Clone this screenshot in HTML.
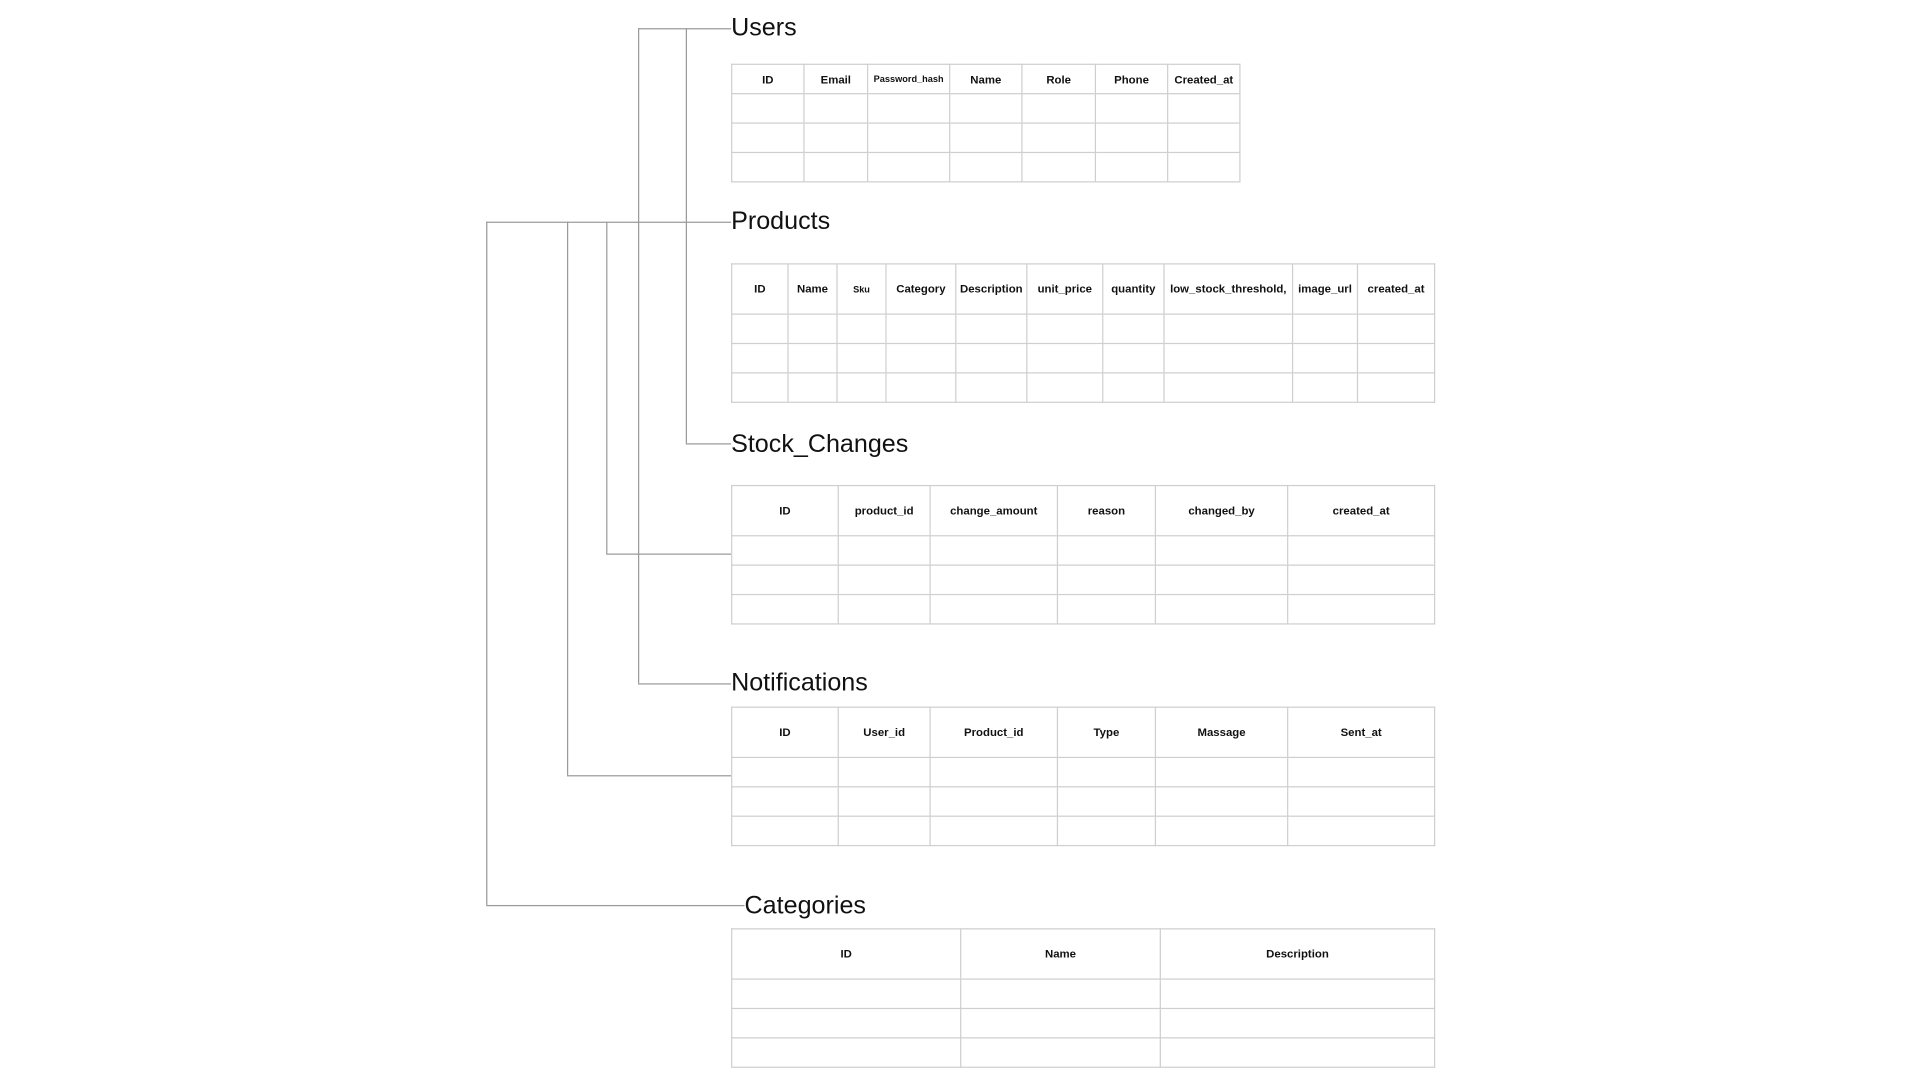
<!DOCTYPE html>
<html><head><meta charset="utf-8"><style>
html,body{margin:0;padding:0;background:#fff;width:1920px;height:1080px;overflow:hidden}
#w{position:absolute;left:0;top:0;width:1570px;height:882px;transform:scale(1.2246);transform-origin:0 0;font-family:"Liberation Sans",sans-serif}
.t{position:absolute;font-size:20.5px;color:#111;line-height:1;white-space:nowrap}
table{position:absolute;border-collapse:collapse;table-layout:fixed}
td{border:1px solid #cfcfcf;padding:0;text-align:center;font-weight:bold;font-size:9.3px;color:#111;height:23px}
tr.h td{height:40px}
.s{font-size:7.5px}
.l{position:absolute;background:#9a9a9a}
</style></head><body><div id="w">
<div class="l" style="left:560px;top:23px;width:1.3px;height:339px"></div>
<div class="l" style="left:560px;top:23px;width:37px;height:1.3px"></div>
<div class="l" style="left:560px;top:362px;width:37px;height:1.3px"></div>
<div class="l" style="left:521px;top:23px;width:1.3px;height:535px"></div>
<div class="l" style="left:521px;top:23px;width:40px;height:1.3px"></div>
<div class="l" style="left:521px;top:558px;width:76px;height:1.3px"></div>
<div class="l" style="left:397px;top:181px;width:200px;height:1.3px"></div>
<div class="l" style="left:397px;top:181px;width:1.3px;height:558px"></div>
<div class="l" style="left:397px;top:739px;width:211px;height:1.3px"></div>
<div class="l" style="left:463px;top:181px;width:1.3px;height:452px"></div>
<div class="l" style="left:463px;top:633px;width:134px;height:1.3px"></div>
<div class="l" style="left:495px;top:181px;width:1.3px;height:271px"></div>
<div class="l" style="left:495px;top:452px;width:102px;height:1.3px"></div>

<div class="t" style="left:597px;top:13px">Users</div>
<table style="left:597px;top:52px;width:415px">
<colgroup><col style="width:59px"><col style="width:52px"><col style="width:67px"><col style="width:59px"><col style="width:60px"><col style="width:59px"><col style="width:59px"></colgroup>
<tr style="height:23px"><td>ID</td><td>Email</td><td class="s">Password_hash</td><td>Name</td><td>Role</td><td>Phone</td><td>Created_at</td></tr>
<tr><td></td><td></td><td></td><td></td><td></td><td></td><td></td></tr>
<tr><td></td><td></td><td></td><td></td><td></td><td></td><td></td></tr>
<tr><td></td><td></td><td></td><td></td><td></td><td></td><td></td></tr>
</table>

<div class="t" style="left:597px;top:171px">Products</div>
<table style="left:597px;top:215px;width:574px">
<colgroup><col style="width:46px"><col style="width:40px"><col style="width:40px"><col style="width:57px"><col style="width:58px"><col style="width:62px"><col style="width:50px"><col style="width:105px"><col style="width:53px"><col style="width:63px"></colgroup>
<tr class="h"><td>ID</td><td>Name</td><td class="s">Sku</td><td>Category</td><td>Description</td><td>unit_price</td><td>quantity</td><td>low_stock_threshold,</td><td>image_url</td><td>created_at</td></tr>
<tr><td></td><td></td><td></td><td></td><td></td><td></td><td></td><td></td><td></td><td></td></tr>
<tr><td></td><td></td><td></td><td></td><td></td><td></td><td></td><td></td><td></td><td></td></tr>
<tr><td></td><td></td><td></td><td></td><td></td><td></td><td></td><td></td><td></td><td></td></tr>
</table>

<div class="t" style="left:597px;top:353px">Stock_Changes</div>
<table style="left:597px;top:396px;width:574px">
<colgroup><col style="width:87px"><col style="width:75px"><col style="width:104px"><col style="width:80px"><col style="width:108px"><col style="width:120px"></colgroup>
<tr class="h"><td>ID</td><td>product_id</td><td>change_amount</td><td>reason</td><td>changed_by</td><td>created_at</td></tr>
<tr><td></td><td></td><td></td><td></td><td></td><td></td></tr>
<tr><td></td><td></td><td></td><td></td><td></td><td></td></tr>
<tr><td></td><td></td><td></td><td></td><td></td><td></td></tr>
</table>

<div class="t" style="left:597px;top:548px">Notifications</div>
<table style="left:597px;top:577px;width:574px">
<colgroup><col style="width:87px"><col style="width:75px"><col style="width:104px"><col style="width:80px"><col style="width:108px"><col style="width:120px"></colgroup>
<tr class="h"><td>ID</td><td>User_id</td><td>Product_id</td><td>Type</td><td>Massage</td><td>Sent_at</td></tr>
<tr><td></td><td></td><td></td><td></td><td></td><td></td></tr>
<tr><td></td><td></td><td></td><td></td><td></td><td></td></tr>
<tr><td></td><td></td><td></td><td></td><td></td><td></td></tr>
</table>

<div class="t" style="left:608px;top:730px">Categories</div>
<table style="left:597px;top:758px;width:574px">
<colgroup><col style="width:187px"><col style="width:163px"><col style="width:224px"></colgroup>
<tr class="h"><td>ID</td><td>Name</td><td>Description</td></tr>
<tr><td></td><td></td><td></td></tr>
<tr><td></td><td></td><td></td></tr>
<tr><td></td><td></td><td></td></tr>
</table>
</div></body></html>
